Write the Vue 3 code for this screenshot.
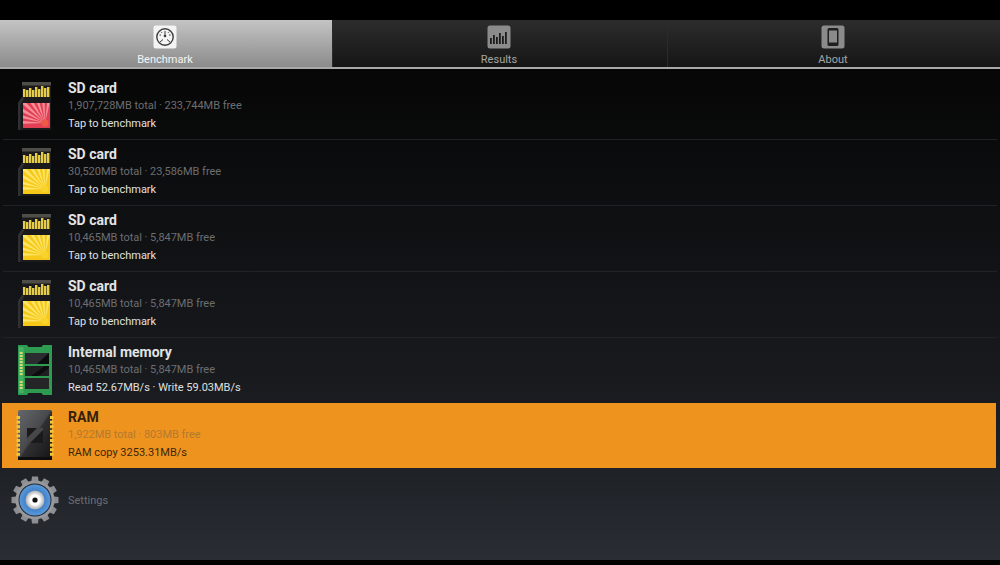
<script setup>
const tabs = [
  { label: 'Benchmark', icon: 'clock', active: true },
  { label: 'Results', icon: 'bars' },
  { label: 'About', icon: 'phone' },
]

const red = { face: '#e23f55', ray: '#f78f98', sun: '#ee5a45' }
const yellow = { face: '#f6c81a', ray: '#fde566', sun: '#f8d32c' }

const rows = [
  { title: 'SD card', info: '1,907,728MB total · 233,744MB free', status: 'Tap to benchmark', icon: 'sd', ...red },
  { title: 'SD card', info: '30,520MB total · 23,586MB free', status: 'Tap to benchmark', icon: 'sd', ...yellow },
  { title: 'SD card', info: '10,465MB total · 5,847MB free', status: 'Tap to benchmark', icon: 'sd', ...yellow },
  { title: 'SD card', info: '10,465MB total · 5,847MB free', status: 'Tap to benchmark', icon: 'sd', ...yellow },
  { title: 'Internal memory', info: '10,465MB total · 5,847MB free', status: 'Read 52.67MB/s · Write 59.03MB/s', icon: 'flash' },
  { title: 'RAM', info: '1,922MB total · 803MB free', status: 'RAM copy 3253.31MB/s', icon: 'ram', active: true },
]

// rays of the sd card label, fanned out from the sun in the lower right corner
const rays = [178, 192, 206, 220, 234, 248, 262, 276].map((deg) => {
  const a = (deg * Math.PI) / 180
  const b = ((deg + 7) * Math.PI) / 180
  const x = 22
  const y = 20
  return `${x},${y} ${x + 40 * Math.cos(a)},${y + 40 * Math.sin(a)} ${x + 40 * Math.cos(b)},${y + 40 * Math.sin(b)}`
})

const pins = [0, 1, 2, 3, 4, 5, 6, 7, 8]
const contacts = [0, 1, 2, 3, 4, 5, 6, 7, 8]
const contactHeights = [8, 7, 9, 7, 10, 8, 11, 9, 10]
const teeth = [0, 30, 60, 90, 120, 150, 180, 210, 240, 270, 300, 330]
</script>

<template>
  <div class="screen">
    <nav class="tabs">
      <div v-for="tab in tabs" :key="tab.label" class="tab" :class="{ 'tab--active': tab.active }">
        <svg class="tab__icon" viewBox="0 0 24 24" width="24" height="24">
          <rect x="0.5" y="0.5" width="23" height="23" rx="2.5" :fill="tab.active ? '#f4f4f4' : '#8b8b8b'" />
          <g v-if="tab.icon === 'clock'" fill="none" stroke="#3c3c3c">
            <circle cx="12" cy="12" r="8.2" stroke-width="1.4" />
            <circle cx="12" cy="11" r="1.3" fill="#3c3c3c" stroke="none" />
            <path d="M12 11V6M7 17l3-2.5M17 17l-3-2.5M6.5 10h1.5M16 10h1.5M8 6.8l1 1M16 6.8l-1 1" stroke-width="1" />
          </g>
          <g v-else-if="tab.icon === 'bars'" fill="#1c1c1c">
            <rect x="3" y="13" width="1.8" height="6" />
            <rect x="6" y="10" width="1.8" height="9" />
            <rect x="9" y="12" width="1.8" height="7" />
            <rect x="12" y="8" width="1.8" height="11" />
            <rect x="15" y="11" width="1.8" height="8" />
            <rect x="18" y="7" width="1.8" height="12" />
          </g>
          <g v-else>
            <rect x="6.5" y="3" width="11" height="18" rx="1.5" fill="#1f1f1f" />
            <rect x="8" y="5.5" width="8" height="12" fill="#8b8b8b" />
          </g>
        </svg>
        <span class="tab__label">{{ tab.label }}</span>
      </div>
    </nav>

    <ul class="list">
      <li v-for="(row, i) in rows" :key="i" class="row" :class="{ 'row--active': row.active }">
        <span class="row__icon">
          <svg v-if="row.icon === 'sd'" viewBox="0 -1 42 50" width="42" height="50">
            <path d="M8 0h29v48H4V21l4-6z" fill="#1a1a1c" />
            <path d="M8 15l-4 6v27h2.5V22l4-6z" fill="#303032" />
            <rect x="8" y="0" width="29" height="3.5" fill="#4f4d47" />
            <rect
              v-for="c in contacts"
              :key="c"
              :x="9 + c * 3"
              :y="15 - contactHeights[c]"
              width="2.4"
              :height="contactHeights[c]"
              fill="#e5cd4a"
            />
            <rect x="9" y="21" width="27" height="25" :fill="row.face" />
            <svg x="9" y="21" width="27" height="25" viewBox="0 0 27 25">
              <polygon v-for="(p, r) in rays" :key="r" :points="p" :fill="row.ray" />
            </svg>
            <circle cx="31" cy="41" r="3.6" :fill="row.sun" />
          </svg>

          <svg v-else-if="row.icon === 'flash'" viewBox="0 0 42 50" width="42" height="50">
            <path d="M4 0h9l1.5 2h13L29 0h9v50h-9l-1.5-2h-13L13 50H4z" fill="#2e9c50" />
            <rect x="5" y="2" width="4.5" height="46" fill="#45b064" />
            <line x1="7.2" y1="7" x2="7.2" y2="31" stroke="#d6d76e" stroke-width="3" stroke-dasharray="2 1" />
            <line x1="7.2" y1="36" x2="7.2" y2="44" stroke="#d6d76e" stroke-width="3" stroke-dasharray="2 1" />
            <rect x="11" y="8" width="24" height="11" fill="#2b2c2f" />
            <rect x="11" y="21" width="24" height="10" fill="#1f1f21" />
            <rect x="11" y="33" width="24" height="11" fill="#252527" />
            <path d="M23 19l12-11v11zM17 31l14-10h4v2l-11 8z" fill="#0c0c0d" />
          </svg>

          <svg v-else viewBox="0 0 42 50" width="42" height="50">
            <defs>
              <linearGradient id="ramBody" x1="0" y1="0" x2="1" y2="1">
                <stop offset="0" stop-color="#66676b" />
                <stop offset="0.48" stop-color="#48494c" />
                <stop offset="0.52" stop-color="#2f2f31" />
                <stop offset="1" stop-color="#141415" />
              </linearGradient>
            </defs>
            <rect x="4" y="0" width="34" height="50" rx="2" fill="url(#ramBody)" />
            <g v-for="p in pins" :key="p" fill="#f2c63c">
              <rect x="2.5" :y="6 + p * 4.6" width="3.5" height="3" />
              <rect x="36" :y="6 + p * 4.6" width="3.5" height="3" />
            </g>
            <rect x="13" y="18" width="16" height="15" fill="#1a1a1b" />
            <path d="M13 33v-5l10-10h6v2L16 33z" fill="#47474a" />
            <rect x="4" y="47" width="34" height="3" fill="#0e0e0f" />
          </svg>
        </span>
        <div class="row__text">
          <h3 class="row__title">{{ row.title }}</h3>
          <p class="row__info">{{ row.info }}</p>
          <p class="row__status">{{ row.status }}</p>
        </div>
      </li>
    </ul>

    <div class="settings">
      <svg class="settings__icon" viewBox="0 0 50 50" width="50" height="50">
        <defs>
          <radialGradient id="gearBlue">
            <stop offset="0.6" stop-color="#3f82cc" />
            <stop offset="1" stop-color="#5a98d8" />
          </radialGradient>
          <radialGradient id="gearHub">
            <stop offset="0.5" stop-color="#ffffff" />
            <stop offset="1" stop-color="#a9abb0" />
          </radialGradient>
        </defs>
        <g fill="#8d8e92">
          <path
            v-for="t in teeth"
            :key="t"
            d="M21 10l1-8.5h6l1 8.5z"
            :transform="`rotate(${t} 25 25)`"
          />
        </g>
        <circle cx="25" cy="25" r="19.5" fill="#97989c" />
        <circle cx="25" cy="25" r="16.5" fill="#23272e" />
        <circle cx="25" cy="25" r="15.5" fill="url(#gearBlue)" />
        <circle cx="25" cy="25" r="9.5" fill="url(#gearHub)" />
        <circle cx="25" cy="25" r="2.6" fill="#111" />
      </svg>
      <span class="settings__label">Settings</span>
    </div>
  </div>
</template>

<style>
html,
body {
  margin: 0;
  background: #000;
}
</style>

<style scoped>
.screen {
  width: 1000px;
  height: 565px;
  box-sizing: border-box;
  padding: 20px 0 5px;
  display: flex;
  flex-direction: column;
  overflow: hidden;
  background: #000;
  font-family: Roboto, "Liberation Sans", sans-serif;
}

.tabs {
  height: 47px;
  flex: none;
  display: grid;
  grid-template-columns: 332px 335px 1fr;
  border-bottom: 2px solid #a8a8a8;
}

.tab {
  display: flex;
  flex-direction: column;
  align-items: center;
  padding: 5px 2px 0 0;
  gap: 4px;
  box-sizing: border-box;
  background: linear-gradient(#2d2d2d, #151515);
  border-left: 1px solid #2b2b2b;
}

.tab--active {
  background: linear-gradient(#c4c4c4, #8b8b8b);
  border-left: none;
}

.tab__icon {
  display: block;
}

.tab__label {
  font-size: 11px;
  line-height: 14px;
  color: #a6a6a6;
}

.tab--active .tab__label {
  color: #f4f4f4;
}

.list {
  list-style: none;
  margin: 0;
  padding: 5px 0 0;
  background: linear-gradient(#060606, #1d2025);
  flex: none;
}

.row {
  height: 65px;
  margin: 0 3px 1px;
  display: flex;
  align-items: center;
  box-shadow: 0 1px 0 #202226;
  padding-left: 11px;
}

.row--active {
  padding-left: 12px;
  margin: -1px 4px 1px 2px;
  background: #ef931f;
  box-shadow: none;
}

.row__icon {
  width: 42px;
  height: 50px;
  flex: none;
  margin-top: -1px;
}

.row__icon svg {
  display: block;
}

.row__text {
  margin-left: 12px;
  padding-bottom: 1px;
  min-width: 0;
}

.row__title {
  margin: 0;
  font-size: 14px;
  line-height: 17px;
  font-weight: 700;
  color: #e3e3e3;
}

.row__info {
  margin: 1px 0 0;
  font-size: 11px;
  line-height: 16px;
  letter-spacing: -0.03px;
  color: #6c6e71;
}

.row__status {
  margin: 2px 0 0;
  font-size: 11px;
  line-height: 16px;
  color: #e0e0e0;
}

.row--active .row__title {
  color: #33210a;
}

.row--active .row__info {
  color: #b27a2f;
}

.row--active .row__status {
  color: #3c2609;
}

.settings {
  flex: 1;
  display: flex;
  align-items: flex-start;
  padding: 6px 0 0 10px;
  gap: 8px;
  background: linear-gradient(#1e2126, #2a2d33);
}

.settings__label {
  margin-top: 18px;
  font-size: 11px;
  line-height: 16px;
  color: #6a6d72;
}
</style>
